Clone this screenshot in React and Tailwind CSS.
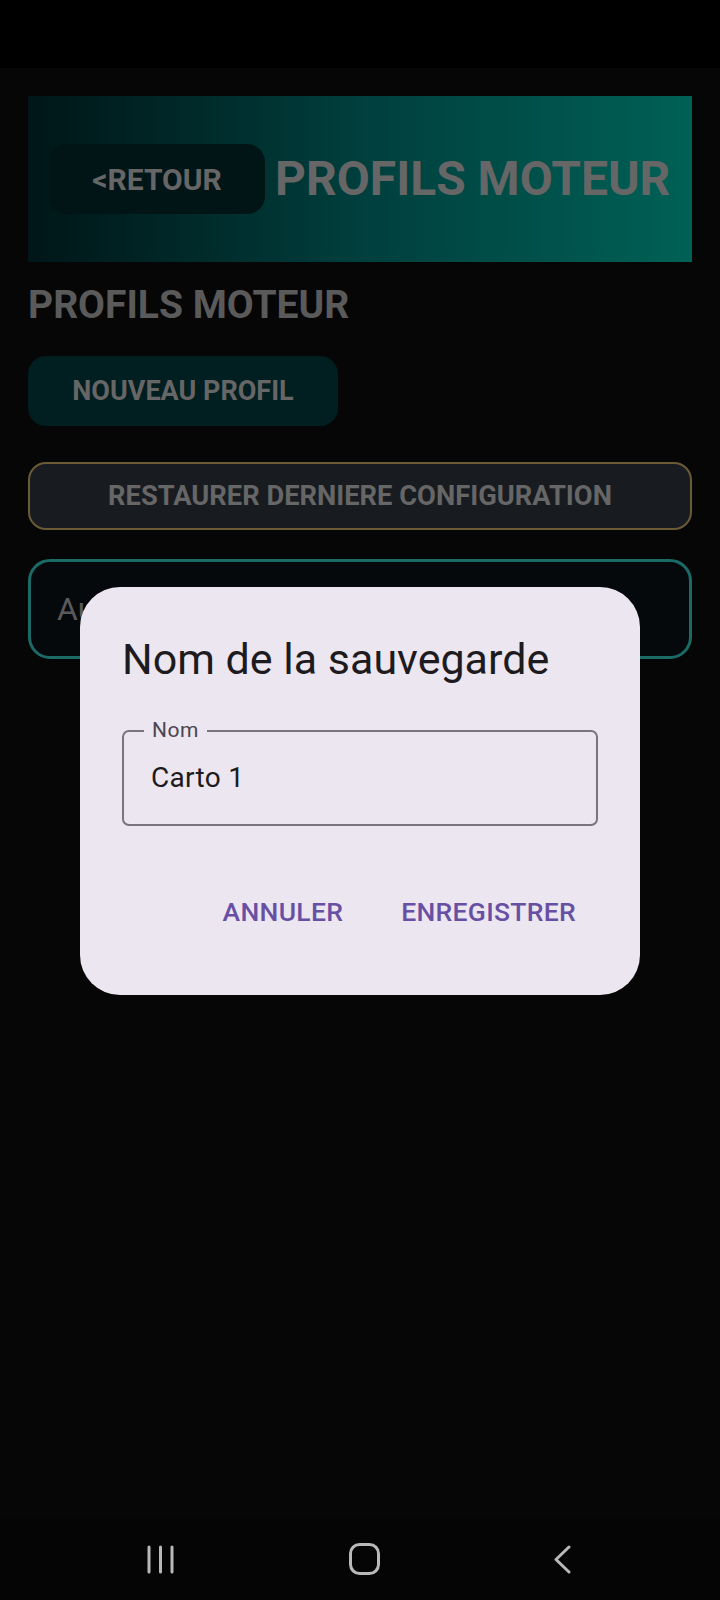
import React from "react";

function NavBar() {
  return (
    <div className="h-[82px] bg-[#050505] flex items-center justify-between px-[147px] pr-[149px]">
      {/* recents */}
      <svg width="27" height="29" viewBox="0 0 27 29" fill="none" stroke="#b9b9b9" strokeWidth="3" strokeLinecap="round">
        <path d="M2 2v25M13.5 2v25M25 2v25" />
      </svg>
      {/* home */}
      <svg width="31" height="32" viewBox="0 0 31 32" fill="none" stroke="#b9b9b9" strokeWidth="3">
        <rect x="1.5" y="1.5" width="28" height="29" rx="9" />
      </svg>
      {/* back */}
      <svg width="17" height="29" viewBox="0 0 17 29" fill="none" stroke="#b9b9b9" strokeWidth="3" strokeLinecap="round" strokeLinejoin="round">
        <path d="M15 2L2 14.5L15 27" />
      </svg>
    </div>
  );
}

function SaveDialog() {
  return (
    <div className="absolute left-[80px] top-[587px] w-[560px] h-[408px] rounded-[40px] bg-[#ece6f0] px-[42px] pt-[44px]">
      <h2 className="text-[43px] leading-[56px] text-[#1d1b20] font-normal">Nom de la sauvegarde</h2>
      <div className="relative mt-[43px] h-[96px] rounded-[7px] border-2 border-[#79747e] flex items-center px-[27px]">
        <span className="absolute -top-[16px] left-[20px] px-[8px] bg-[#ece6f0] text-[21px] leading-[28px] text-[#49454f] tracking-[0.5px]">
          Nom
        </span>
        <span className="text-[28px] text-[#1d1b20] tracking-[0.3px]">Carto 1</span>
      </div>
      <div className="flex justify-end gap-[58px] mt-[66px] pr-[22px]">
        <button className="text-[26.5px] font-medium text-[#6750a4] tracking-[0.3px]">ANNULER</button>
        <button className="text-[26.5px] font-medium text-[#6750a4] tracking-[0.3px]">ENREGISTRER</button>
      </div>
    </div>
  );
}

export default function App() {
  return (
    <div
      className="relative w-[720px] h-[1600px] bg-[#060606] flex flex-col overflow-hidden"
      style={{ fontFamily: "Roboto, 'Noto Sans', sans-serif" }}
    >
      {/* status bar */}
      <div className="h-[68px] bg-black shrink-0" />

      <div className="flex-1 px-[28px] pt-[28px]">
        {/* header */}
        <div className="h-[166px] bg-gradient-to-r from-[#001618] via-[#003f3d] to-[#006156] flex items-center pl-[21px] gap-[10px]">
          <button className="w-[216px] h-[70px] rounded-[18px] bg-[#011416] text-[#666666] font-bold text-[30px]">
            &lt;RETOUR
          </button>
          <h1 className="text-[48px] font-bold text-[#666666] whitespace-nowrap">PROFILS MOTEUR</h1>
        </div>

        <h2 className="mt-[18px] text-[39px] font-bold text-[#5a5a5a] leading-[50px]">PROFILS MOTEUR</h2>

        <button className="mt-[26px] w-[310px] h-[70px] rounded-[18px] bg-[#011e20] text-[#666666] font-bold text-[27px]">
          NOUVEAU PROFIL
        </button>

        <button className="mt-[36px] w-full h-[68px] rounded-[18px] border-2 border-[#6b5a36] bg-[#181c20] text-[#666666] font-bold text-[27.3px]">
          RESTAURER DERNIERE CONFIGURATION
        </button>

        <div className="mt-[29px] h-[100px] rounded-[22px] border-[3px] border-[#1b6a66] bg-[#05090c] flex items-center px-[26px]">
          <span className="text-[32px] text-[#5a5a5a]">Aucun profil enregistré</span>
        </div>
      </div>

      <NavBar />
      <SaveDialog />
    </div>
  );
}
